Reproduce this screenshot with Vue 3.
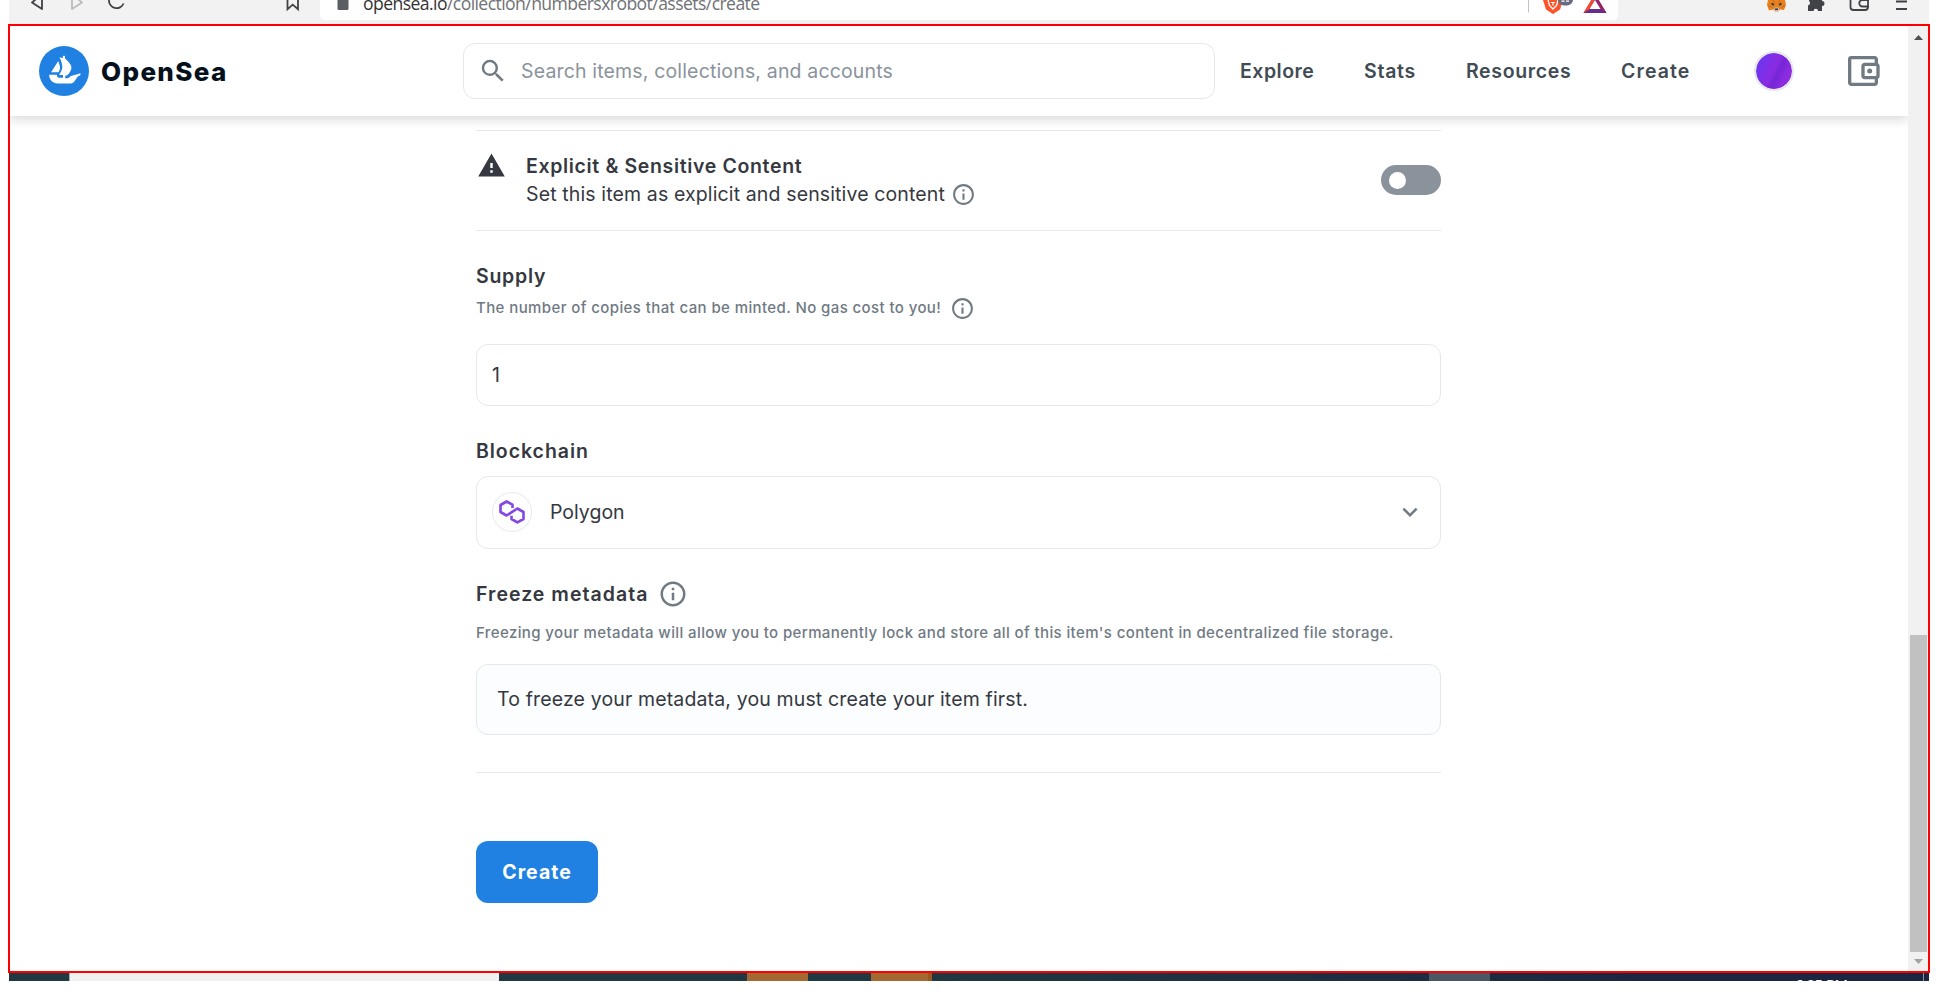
<script setup>
const navLinks = [
  { label: 'Explore', cls: 'n1' },
  { label: 'Stats', cls: 'n2' },
  { label: 'Resources', cls: 'n3' },
  { label: 'Create', cls: 'n4' },
]
const tasks = ['start', 'search', 'dark-a', 'app', 'dark-b', 'app app-edge', 'dark-c', 'active', 'tray']
const infoPath = 'M11 7h2v2h-2zm0 4h2v6h-2zm1-9C6.48 2 2 6.48 2 12s4.48 10 10 10 10-4.48 10-10S17.52 2 12 2zm0 18c-4.41 0-8-3.59-8-8s3.59-8 8-8 8 3.59 8 8-3.59 8-8 8z'
</script>

<template>
  <div class="screen">
    <div class="chrome">
      <svg class="chrome-left" width="311" height="24" viewBox="9 0 311 24" fill="none" stroke="#404246" stroke-width="1.8">
        <path d="M42 -6V9L32 2.5Z" stroke-linejoin="round" />
        <path d="M72 -6V9L82 2.5Z" stroke="#bcbcbc" stroke-linejoin="round" />
        <path d="M109 0a7.6 7.6 0 0 0 14.6 3.5" />
        <path d="M287.500 -6V9.200L292.700 4.600L298 9.200V-6" />
      </svg>
      <div class="address">
        <svg class="lock" width="12" height="12" viewBox="0 0 12 12"><rect x=".5" y="-1" width="11" height="11" rx="1.500" fill="#5b5e63" /></svg>
        <span class="url"><b>opensea.io</b>/collection/numbersxrobot/assets/create</span>
      </div>
      <svg class="chrome-right" width="419" height="24" viewBox="1510 0 419 24" fill="none">
        <path d="M1613 20Q1618 20 1618 15V20Z" fill="#f2f2f2" />
        <path d="M1528.500 0V12.500" stroke="#c4c4c4" />
        <path d="M1543 0L1546 9.500L1553 14L1560 9.500L1563 0Z" fill="#fb542b" />
        <path d="M1548 0l1.500 5.500 3.500 3.500 3.500-3.500 1.500-5.500" stroke="#fff" stroke-width="1.300" />
        <path d="M1551 2.500h4M1553 2.500v3" stroke="#fff" stroke-width="1.200" />
        <rect x="1558" y="-8" width="15" height="13.500" rx="6" fill="#686b80" />
        <path d="M1561.500 1.200h3M1566 1.200h3" stroke="#fff" stroke-width="1.200" />
        <path d="M1583.500 13L1595 -6L1606.500 13Z" fill="#662d91" />
        <path d="M1583.500 13L1595 -6L1595 -1L1589 9.500Z" fill="#ff4724" />
        <path d="M1606.500 13L1595 -6L1595 -1L1601 9.500Z" fill="#9e1f63" />
        <path d="M1589.500 9L1595 0L1600.500 9Z" fill="#fff" />
        <path d="M1768 0H1785L1786 5L1784 10L1780 9.500L1778 11.500H1775L1773 9.500L1769 10.500L1767 5Z" fill="#e8821e" />
        <path d="M1773.500 9.500L1775 7.500H1778L1779.500 9.500L1778 11.500H1775Z" fill="#d7c1b3" />
        <path d="M1775 9.200h3M1771.500 3.500l2.500 1.500M1781.500 3.500l-2.500 1.500" stroke="#233447" stroke-width="1.500" />
        <path d="M1773 0l1.500 4M1780 0l-1.500 4M1768 6l4 1M1785 6l-4 1" stroke="#c8641a" stroke-width=".8" />
        <path d="M1809 0H1822V1a2.500 2.500 0 0 1 0 5V11H1818a2.200 2.200 0 0 0-4.400 0H1808V5.500a2.500 2.500 0 0 0 1-4.500Z" fill="#404246" />
        <path d="M1850.500 -3V7q0 3 3 3H1865q3 0 3-3V-3M1869 6.500H1862.500a3 3 0 0 1 0-6.500H1869" stroke="#404246" stroke-width="1.800" />
        <path d="M1896 1.500H1907M1896 9H1907" stroke="#404246" stroke-width="1.800" />
      </svg>
    </div>

    <div class="window">
      <div class="page">
        <header class="header">
          <svg class="logo" width="50" height="50" viewBox="0 0 90 90">
            <circle cx="45" cy="45" r="45" fill="#2081e2" />
            <path fill="#fff" d="M22.200 46.500l.2-.3 11.700-18.300c.2-.3.6-.2.700.1 2 4.400 3.600 9.900 2.900 13.300-.3 1.400-1.200 3.300-2.200 5l-.4.7c-.1.100-.2.200-.4.200H22.600c-.4 0-.600-.4-.4-.7z" />
            <path fill="#fff" d="M74.400 49.900v2.900c0 .2-.1.300-.2.400-.9.400-4.100 1.800-5.400 3.600-3.300 4.600-5.900 11.300-11.600 11.300H33.400C25 68.100 18.300 61.300 18.300 52.900v-.3c0-.2.200-.4.400-.4H31.900c.3 0 .5.200.400.5-.1.900.1 1.700.4 2.500.7 1.500 2.300 2.400 3.900 2.400H43.200v-5.100H36.700c-.3 0-.5-.4-.3-.7l.2-.4c.6-.9 1.500-2.200 2.400-3.800.6-1.100 1.200-2.200 1.600-3.300l.3-.8c.1-.4.300-.8.4-1.100.1-.4.200-.8.3-1.100.2-1.100.3-2.300.3-3.500 0-.5 0-1-.1-1.400 0-.5-.1-1.100-.2-1.600-.1-.5-.1-.9-.3-1.400-.1-.7-.3-1.400-.5-2.100l-.1-.3c-.1-.5-.3-1-.4-1.500-.5-1.600-1-3.200-1.600-4.600l-.6-1.600-.9-2.100c-.1-.2.100-.4.300-.4l4.100 1.100 .5.200 .6.200 .2.100v-2.300c0-1.100.9-2 2-2s2 .9 2 2v3.400l.4.100 .1.100c.1.100.3.200.5.400.6.500 1.400 1.200 2.300 2 .7.600 1.500 1.300 2.200 2.100 1.600 1.600 3.100 3.500 4.200 5.400.4.700.7 1.400 1 2.200.6 1.600.8 3.300.6 5-.1.500-.2 1-.3 1.400-.5 1.800-1.300 3.500-2.300 5-.3.600-.7 1.200-1.200 1.800l-1.400 1.800c-.400.500-.9 1.100-1.300 1.500-.3.400-.6.700-.9 1-.2.200-.4.200-.6.200H47.200v5.100h4c.9 0 1.700-.3 2.400-.9.200-.2 1.300-1.100 2.500-2.500l.2-.1 18.600-5.400c.3-.1.500.1.500.4z" transform="translate(0,-.5)" />
          </svg>
          <span class="brand">OpenSea</span>
          <div class="searchbox">
            <svg class="search-icon" width="30" height="30" viewBox="0 0 24 24"><path fill="#707a83" d="M15.500 14h-.79l-.28-.27A6.471 6.471 0 0 0 16 9.500 6.500 6.500 0 1 0 9.500 16c1.610 0 3.090-.59 4.230-1.570l.27.28v.79l5 4.990L20.490 19l-4.990-5zm-6 0C7.010 14 5 11.990 5 9.500S7.010 5 9.500 5 14 7.010 14 9.500 11.990 14 9.500 14z" /></svg>
            <span class="placeholder">Search items, collections, and accounts</span>
          </div>
          <nav class="nav">
            <a v-for="l in navLinks" :key="l.label" :class="l.cls"><span>{{ l.label }}</span></a>
          </nav>
          <span class="avatar"></span>
          <svg class="wallet" width="40" height="40" viewBox="0 0 24 24"><path fill="#707a83" d="M21 7.280V5c0-1.100-.9-2-2-2H5a2 2 0 0 0-2 2v14c0 1.100.89 2 2 2h14c1.100 0 2-.9 2-2v-2.280c.59-.35 1-.98 1-1.720V9c0-.74-.41-1.380-1-1.720zM20 9v6h-7V9h7zM5 19V5h14v2h-6c-1.100 0-2 .9-2 2v6c0 1.100.9 2 2 2h6v2H5z" /><circle cx="16" cy="12" r="1.500" fill="#707a83" /></svg>
        </header>

        <main class="form">
          <section class="sensitive">
            <svg class="warn" width="29" height="29" viewBox="0 0 24 24"><path fill="#353840" d="M1 21h22L12 2 1 21zm12-3h-2v-2h2v2zm0-4h-2v-4h2v4z" /></svg>
            <div class="sensitive-text">
              <h4><span class="t-explicit">Explicit &amp; Sensitive Content</span></h4>
              <p><span class="t-set">Set this item as explicit and sensitive content</span>
                <svg class="info" width="25" height="25" viewBox="0 0 24 24"><path :d="infoPath" fill="#707a83" /></svg>
              </p>
            </div>
            <span class="toggle"><i></i></span>
          </section>

          <h4 class="h-supply"><span class="t-supply">Supply</span></h4>
          <p class="caption c-supply"><span class="t-copies">The number of copies that can be minted. No gas cost to you!</span>
            <svg class="info" width="25" height="25" viewBox="0 0 24 24"><path :d="infoPath" fill="#707a83" /></svg>
          </p>
          <div class="field amount">1</div>

          <h4 class="h-chain"><span class="t-chain">Blockchain</span></h4>
          <div class="field select">
            <span class="token">
              <svg width="26" height="24" viewBox="0 0 26 24" fill="none" stroke="#8247e5" stroke-width="2.600" stroke-linejoin="round">
                <path d="M13.500 8V4.700L7.600 1.500L1.500 5V12L7.600 15.500L18.400 8.500L24.500 12V19L18.400 22.400L12.500 19V15.700" />
              </svg>
            </span>
            <span class="t-polygon">Polygon</span>
            <svg class="chevron" width="30" height="30" viewBox="0 0 24 24"><path fill="#707a83" d="M16.590 8.590 12 13.170 7.410 8.590 6 10l6 6 6-6z" /></svg>
          </div>

          <h4 class="h-freeze"><span class="t-freeze">Freeze metadata</span>
            <svg width="30" height="30" viewBox="0 0 24 24"><path :d="infoPath" fill="#707a83" /></svg>
          </h4>
          <p class="caption c-freeze"><span class="t-lock">Freezing your metadata will allow you to permanently lock and store all of this item's content in decentralized file storage.</span></p>
          <div class="field notice"><span class="t-notice">To freeze your metadata, you must create your item first.</span></div>
          <hr>
          <button class="create"><span>Create</span></button>
        </main>
      </div>
      <div class="scrollbar">
        <svg width="9" height="5" viewBox="0 0 9 5"><path d="M4.500 0L9 5H0Z" fill="#505050" /></svg>
        <div class="thumb"></div>
        <svg class="down" width="9" height="5" viewBox="0 0 9 5"><path d="M0 0H9L4.500 5Z" fill="#a3a3a3" /></svg>
      </div>
    </div>

    <div class="taskbar">
      <div v-for="(t, i) in tasks" :key="i" :class="t"><span v-if="t === 'tray'" class="clock">6:05 PM</span></div>
    </div>
  </div>
</template>

<style>
html, body { margin: 0; background: #fff; }
</style>

<style scoped>
.screen { width: 1938px; height: 997px; overflow: hidden; background: #fff; font-family: Inter, "Open Sans", sans-serif; color: #353840; display: flex; flex-direction: column; }
.screen * { box-sizing: border-box; }
svg { display: block; flex: none; }
h4, p { margin: 0; white-space: nowrap; }
.chrome { margin-left: 9px; width: 1920px; height: 24px; background: #f2f2f2; display: flex; align-items: flex-start; flex: none; }
.address { width: 1190px; height: 20px; background: #fff; border-radius: 0 0 0 5px; display: flex; overflow: hidden; }
.lock { margin-left: 17px; width: 12px; }
.url { margin: -9px 0 0 14px; font: 17.600px/25px "Open Sans", sans-serif; color: #707276; white-space: nowrap; letter-spacing: -.58px; }
.url b { font-weight: 400; color: #333; }
.chrome-right { background: linear-gradient(90deg, #fff 108px, transparent 108px) no-repeat 0 0 / 100% 20px; }

.window { margin-left: 8px; width: 1922px; height: 949px; border: 2px solid #f00; display: flex; flex: none; background: #fff; }
.page { width: 1898px; overflow: hidden; }
.header { height: 90px; display: flex; align-items: center; box-shadow: 0 4px 10px rgba(4, 17, 29, .15); position: relative; }
.logo { margin-left: 29px; }
.brand { margin-left: 12px; width: 362px; font-size: 26px; font-weight: 800; color: #04111d; letter-spacing: 1.350px; white-space: nowrap; }
.searchbox { width: 752px; height: 56px; border: 1px solid #e5e8eb; border-radius: 12px; display: flex; align-items: center; }
.search-icon { margin-left: 14px; }
.placeholder { margin-left: 13px; font-size: 19.500px; line-height: 28px; letter-spacing: .16px; color: #8a939b; white-space: nowrap; }
.nav { display: flex; margin-left: 25px; font-size: 19.500px; font-weight: 600; color: #414b54; }
.nav a { display: block; }
.n1 { width: 124px; letter-spacing: .5px; }
.n2 { width: 102px; letter-spacing: .75px; }
.n3 { width: 155px; letter-spacing: .65px; }
.n4 { width: 133px; letter-spacing: 1.100px; }
.avatar { width: 40px; height: 40px; border-radius: 50%; border: 2px solid #e5e8eb; background: linear-gradient(115deg, #6f35ee 15%, #8a2be2 48%, #7426d6 60%, #8b2be0 75%, #8f2be0) padding-box; }
.wallet { margin-left: 49px; }

.form { margin-left: 466px; width: 965px; padding-top: 14px; }
.sensitive { height: 101px; border: solid #e5e8eb; border-width: 1px 0; display: flex; }
.warn { margin-top: 20px; margin-left: .5px; }
.sensitive-text { margin-left: 20.500px; padding-top: 20px; flex: 1; }
h4 { font-size: 19.500px; font-weight: 600; line-height: 30px; }
.sensitive p { font-size: 19.500px; line-height: 28px; display: flex; align-items: center; gap: 6px; margin-top: -1px; }
.t-explicit { letter-spacing: .65px; }
.t-set { letter-spacing: .13px; }
.t-supply { letter-spacing: .75px; }
.t-copies { letter-spacing: .4px; margin-top: -1.500px; }
.t-chain { letter-spacing: .95px; }
.t-freeze { letter-spacing: 1.030px; }
.t-lock { letter-spacing: .39px; }
.t-notice { letter-spacing: .14px; }
.toggle { width: 60px; height: 30px; border-radius: 15px; background: #8a939b; margin-top: 34px; padding: 7px 8px; }
.toggle i { display: block; width: 17px; height: 17px; border-radius: 50%; background: #fff; }
.h-supply { margin-top: 30px; }
.caption { font-size: 15px; font-weight: 500; color: #707a83; }
.c-supply { height: 25px; margin-top: 5px; line-height: 25px; display: flex; gap: 9px; }
.field { border: 1px solid #e5e8eb; border-radius: 12px; display: flex; align-items: center; font-size: 19.500px; }
.amount { margin-top: 23px; height: 62px; padding-left: 15px; }
.h-chain { margin-top: 30px; }
.select { margin-top: 10px; height: 73px; padding: 0 0 2px 15px; }
.token { width: 40px; height: 40px; border: 1px solid #e5e8eb; border-radius: 50%; display: grid; place-items: center; margin-right: 18px; }
.chevron { margin-left: auto; margin-right: 15px; }
.h-freeze { margin-top: 30px; display: flex; gap: 10px; }
.c-freeze { line-height: 24px; margin-top: 12px; }
.notice { margin-top: 19px; height: 71px; background: #fbfdff; padding: 0 0 2px 20px; white-space: nowrap; }
hr { border: 0; height: 1px; background: #e5e8eb; margin: 37px 0 68px; }
.create { width: 122px; height: 62px; border: 0; padding: 0; border-radius: 12px; background: #2081e2; color: #fff; font: 700 19.500px Inter, sans-serif; letter-spacing: 1px; display: block; }

.scrollbar { width: 20px; background: #f1f1f1; display: flex; flex-direction: column; align-items: center; padding-top: 9px; }
.thumb { width: 17px; height: 317px; background: #c1c1c1; margin-top: 595px; }
.down { margin-top: 7px; }

.taskbar { margin-left: 9px; width: 1920px; height: 8px; display: flex; flex: none; background: linear-gradient(90deg, #203842, #203842 48%, #1b2742 85%); }
.taskbar > div { height: 8px; }
.start { width: 60px; }
.search { width: 430px; background: #f1f1f1; border-left: 1px solid #aaa; }
.dark-a { width: 248px; }
.app { width: 61px; background: #a46832; }
.dark-b { width: 63px; }
.app-edge { border-right: 4px solid #985820; }
.dark-c { width: 497px; }
.active { width: 61px; background: #4a5765; }
.tray { flex: 1; border-right: 1px solid #8b93a0; margin-right: 5px; overflow: hidden; }
.clock { display: block; margin-left: 305px; padding-top: 1px; font: 15px/20px "Open Sans", sans-serif; letter-spacing: -.5px; color: #fff; white-space: nowrap; }
</style>
